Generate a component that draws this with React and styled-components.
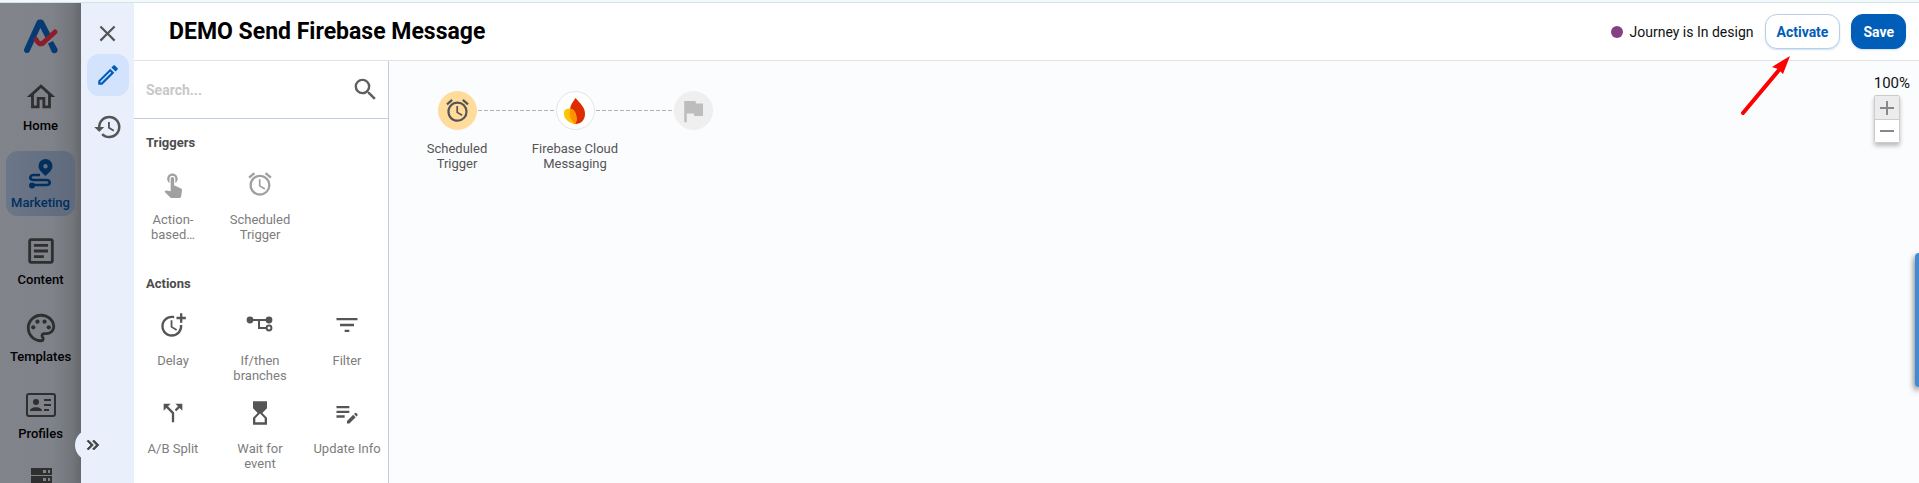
import React from "react";
import styled, { createGlobalStyle } from "styled-components";
import {
  MdOutlineHome,
  MdOutlineArticle,
  MdOutlinePalette,
  MdHistory,
  MdOutlineEdit,
  MdClose,
  MdSearch,
  MdTouchApp,
  MdAccessAlarm,
  MdMoreTime,
  MdFilterList,
  MdCallSplit,
  MdHourglassTop,
  MdEditNote,
  MdFlag,
  MdKeyboardDoubleArrowRight,
} from "react-icons/md";

const GlobalStyle = createGlobalStyle`
  *, *::before, *::after { box-sizing: border-box; }
  html, body, #root { height: 100%; }
  body {
    margin: 0;
    padding-top: 2px;
    overflow: hidden;
    font-family: Roboto, "Liberation Sans", sans-serif;
    color: #111;
    background: #f1f9fc;
  }
  button, input { font: inherit; color: inherit; }
  button { padding: 0; border: 0; background: none; cursor: pointer; }
  svg { display: block; flex: none; }
`;

const Page = styled.div`
  display: flex;
  height: 100%;
  border-top: 1px solid #d3e2e6;
  position: relative;
`;

const MainNav = styled.nav`
  flex: none;
  width: 81px;
  padding: 16px 6px 0;
  display: flex;
  flex-direction: column;
  align-items: center;
  overflow: hidden;
  background: linear-gradient(90deg, #81848b 0, #7f8289 52px, #73767b 72px, #66686c 100%);
`;

const Logo = styled.a`
  flex: none;
  height: 35px;
  margin-bottom: 20px;
`;

const NavList = styled.div`
  align-self: stretch;
  display: flex;
  flex-direction: column;
  gap: 12px;
`;

const NavItem = styled.a`
  height: 65px;
  padding-top: 7px;
  border-radius: 12px;
  display: flex;
  flex-direction: column;
  align-items: center;
  gap: 5px;
  font-size: 13px;
  line-height: 16px;
  font-weight: 500;
  text-decoration: none;
  color: ${(p) => (p.$active ? "#022f5e" : "#000")};
  background: ${(p) => (p.$active ? "linear-gradient(90deg, #6b7689, #5f6a7c)" : "none")};
`;

const NavIcon = styled.span`
  height: 32px;
  display: flex;
  align-items: center;
  color: ${(p) => (p.$active ? "#022f5e" : "#2f2f2f")};
`;

const Rail = styled.aside`
  position: relative;
  flex: none;
  width: 53px;
  padding: 9px 6px;
  display: flex;
  flex-direction: column;
  align-items: center;
  background: #e9f0fc;
`;

const RailButton = styled.button`
  width: 42px;
  height: 42px;
  display: flex;
  align-items: center;
  justify-content: center;
  border-radius: 12px;
  color: ${(p) => (p.$active ? "#005eb8" : "#555")};
  background: ${(p) => (p.$active ? "#d3e3fd" : "none")};
`;

const RailGroup = styled.div`
  display: flex;
  flex-direction: column;
  gap: 10px;
`;

const Expand = styled.button`
  position: absolute;
  left: -6px;
  bottom: 22px;
  width: 32px;
  height: 32px;
  padding-right: 4px;
  border-radius: 50%;
  display: flex;
  align-items: center;
  justify-content: flex-end;
  color: #444;
  background: #e9f0fc;
  path:not([fill="none"]) { stroke: currentColor; stroke-width: 1; }
`;

const Work = styled.div`
  flex: 1;
  min-width: 0;
  display: flex;
  flex-direction: column;
`;

const Header = styled.header`
  flex: none;
  height: 58px;
  padding: 0 13px 0 35px;
  display: flex;
  align-items: center;
  justify-content: space-between;
  background: #fff;
  border-bottom: 1px solid #e0e2e5;
`;

const Title = styled.h1`
  margin: 0;
  font-size: 23px;
  line-height: 28px;
  font-weight: 700;
  color: #000;
`;

const HeaderActions = styled.div`
  display: flex;
  align-items: center;
  gap: 11px;
`;

const Status = styled.div`
  display: flex;
  align-items: center;
  gap: 7px;
  font-size: 14px;
  line-height: 20px;
`;

const StatusDot = styled.span`
  width: 12px;
  height: 12px;
  border-radius: 50%;
  background: #854085;
`;

const ActionButton = styled.button`
  height: 35px;
  padding: 0 11px;
  border-radius: 12px;
  font-size: 14px;
  line-height: 20px;
  font-weight: 700;
  color: ${(p) => (p.$primary ? "#fff" : "#005eb8")};
  background: ${(p) => (p.$primary ? "#005eb8" : "#fff")};
  border: 1px solid ${(p) => (p.$primary ? "#005eb8" : "#b9cfe8")};
  box-shadow: 0 1px 2px rgba(0, 94, 184, 0.2);
`;

const Body = styled.div`
  flex: 1;
  min-height: 0;
  display: flex;
`;

const Palette = styled.section`
  flex: none;
  width: 255px;
  overflow: hidden;
  background: #fff;
  border-right: 1px solid #c0cbdf;
`;

const SearchBar = styled.label`
  height: 58px;
  padding: 0 8px 0 12px;
  display: flex;
  align-items: center;
  border-bottom: 1px solid #c0cbdf;
  color: #5f5f5f;
`;

const SearchInput = styled.input`
  flex: 1;
  min-width: 0;
  padding: 0;
  border: 0;
  outline: 0;
  font-size: 14px;
  line-height: 20px;
  font-weight: 700;
  background: none;
  &::placeholder { color: #c8c8c8; opacity: 1; }
`;

const Group = styled.div`
  padding: 16px 0 0 3px;
  height: ${(p) => (p.$tall ? "220px" : "141px")};
`;

const GroupTitle = styled.h2`
  margin: 0 0 19px;
  padding-left: 9px;
  font-size: 13px;
  line-height: 16px;
  font-weight: 700;
  color: #4c4c4c;
`;

const Tiles = styled.div`
  display: grid;
  grid-template-columns: 72px 72px 72px;
  column-gap: 15px;
  row-gap: 13px;
`;

const Tile = styled.button`
  height: 75px;
  display: flex;
  flex-direction: column;
  align-items: center;
  gap: 14px;
  color: ${(p) => (p.$muted ? "#a0a0a0" : "#555")};
`;

const TileLabel = styled.span`
  width: 100%;
  font-size: 13px;
  line-height: 15px;
  color: #7d7d7d;
`;

const Canvas = styled.main`
  flex: 1;
  min-width: 0;
  padding: 30px 9px 0 18px;
  display: flex;
  justify-content: space-between;
  align-items: flex-start;
  background: #fbfcfe;
`;

const Flow = styled.div`
  display: flex;
  align-items: flex-start;
`;

const Step = styled.div`
  width: 100px;
  display: flex;
  flex-direction: column;
  align-items: center;
  gap: 11px;
  text-align: center;
  font-size: 13px;
  line-height: 15px;
  color: #555;
`;

const Node = styled.div`
  width: 39px;
  height: 39px;
  border-radius: 50%;
  display: flex;
  align-items: center;
  justify-content: center;
  color: ${(p) => p.$color};
  background: ${(p) => p.$fill};
  border: 1px solid ${(p) => p.$line};
`;

const Connector = styled.div`
  width: 76px;
  height: 1px;
  margin: 19px -29px 0;
  background: repeating-linear-gradient(90deg, #b0b0b0 0 4px, transparent 4px 6px);
`;

const ZoomPanel = styled.div`
  margin-top: -17px;
  display: flex;
  flex-direction: column;
  gap: 3px;
  font-size: 15px;
  line-height: 18px;
`;

const ZoomButtons = styled.div`
  width: 26px;
  border: 1px solid #ccc;
  border-radius: 2px;
  box-shadow: 0 3px 4px rgba(0, 0, 0, 0.25);
`;

const ZoomButton = styled.button`
  width: 24px;
  height: 23px;
  display: flex;
  align-items: center;
  justify-content: center;
  color: #85898d;
  background: ${(p) => (p.$shaded ? "#ececec" : "#fff")};
  & + & { border-top: 1px solid #ccc; }
`;

const SideTab = styled.div`
  position: absolute;
  right: 0;
  top: 250px;
  width: 4px;
  height: 134px;
  border-radius: 8px 0 0 8px;
  background: #428bd0;
  box-shadow: 0 3px 6px rgba(0, 0, 0, 0.8);
`;

const Pointer = styled.svg`
  position: absolute;
  right: 128px;
  top: 49px;
`;

const LogoMark = () => (
  <svg width="36" height="35" viewBox="0 0 36 35" fill="none">
    <path d="M4 31L16.500 3.500H18L25 17" stroke="#073a72" strokeWidth="6" strokeLinecap="round" strokeLinejoin="round" />
    <path d="M25 24.500l5-2.500 4.500 8c1 4-4 6-6 2.500z" fill="#073a72" />
    <path d="M13 20.500c2 4 5 6 8 2.500L32 13" stroke="#8c1d2b" strokeWidth="5" strokeLinecap="round" strokeLinejoin="round" />
  </svg>
);

const RouteIcon = () => (
  <svg width="30" height="32" viewBox="0 0 30 32">
    <path d="M19.500 1a7 7 0 0 1 7 7c0 4-4 7-7 10-3-3-7-6-7-10a7 7 0 0 1 7-7zm0 5a2.200 2.200 0 1 0 0 4.400 2.200 2.200 0 0 0 0-4.400z" fill="currentColor" fillRule="evenodd" />
    <path d="M14 17H8c-5 0-5 5 0 5h12c5 0 5 5 0 5H6" fill="none" stroke="currentColor" strokeWidth="2.600" />
    <circle cx="6" cy="27.500" r="3" fill="currentColor" />
  </svg>
);

const ProfileIcon = () => (
  <svg width="32" height="32" viewBox="0 0 32 32" fill="currentColor">
    <rect x="2" y="5" width="28" height="22" rx="2" fill="none" stroke="currentColor" strokeWidth="2" />
    <circle cx="11" cy="13" r="3" />
    <path d="M5 22c0-5 12-5 12 0zM19 10h7v2h-7zM19 15h7v2h-7zM19 20h5v2h-5z" />
  </svg>
);

const ServerIcon = () => (
  <svg width="32" height="32" viewBox="0 0 32 32">
    <path fill="currentColor" fillRule="evenodd" d="M6 2h21v7H6zm12 2v3h3V4zm5 0v3h2V4zM6 10h21v7H6zm12 2v3h3v-3zm5 0v3h2v-3zM6 18h21v7H6z" />
  </svg>
);

const BranchIcon = () => (
  <svg width="28" height="28" viewBox="0 0 28 28" fill="none" stroke="currentColor" strokeWidth="2">
    <path d="M4 9h19M13 9v8h7" />
    <circle cx="4" cy="9" r="3.400" fill="currentColor" stroke="none" />
    <circle cx="23" cy="9" r="3.400" fill="currentColor" stroke="none" />
    <circle cx="23" cy="17" r="2.400" />
  </svg>
);

const FlameIcon = () => (
  <svg width="22" height="28" viewBox="0 0 22 28">
    <path d="M11.500 1c5 6 9.500 9 9.500 16 0 6-4 10-9.500 10S6 20 6 14c0-6 3-9 5.500-13z" fill="#dd2c00" />
    <path d="M1 13c3-3 10-2 11 5 1 4 1 6-1 9C5 26 0 22 0 17c0-2 0-3 1-4z" fill="#ffc400" />
    <path d="M6.200 12c4 1 6 4 6.300 8 0 2 0 5-1 7-5-3-6.500-9-5.300-15z" fill="#ff9100" />
  </svg>
);

const PointerArrow = () => (
  <Pointer width="52" height="66" viewBox="0 0 52 66" aria-hidden="true">
    <path d="M4 61L40 18" stroke="#fe0000" strokeWidth="4" strokeLinecap="round" />
    <path d="M51 4L44 22l-5-5-6-2z" fill="#fe0000" />
  </Pointer>
);

const navItems = [
  { label: "Home", icon: <MdOutlineHome size={34} /> },
  { label: "Marketing", icon: <RouteIcon />, active: true },
  { label: "Content", icon: <MdOutlineArticle size={34} /> },
  { label: "Templates", icon: <MdOutlinePalette size={34} /> },
  { label: "Profiles", icon: <ProfileIcon /> },
  { label: "", icon: <ServerIcon /> },
];

const triggers = [
  { label: "Action-based…", icon: <MdTouchApp size={28} /> },
  { label: "Scheduled Trigger", icon: <MdAccessAlarm size={28} /> },
];

const actions = [
  { label: "Delay", icon: <MdMoreTime size={28} /> },
  { label: "If/then branches", icon: <BranchIcon /> },
  { label: "Filter", icon: <MdFilterList size={28} /> },
  { label: "A/B Split", icon: <MdCallSplit size={28} /> },
  { label: "Wait for event", icon: <MdHourglassTop size={28} /> },
  { label: "Update Info", icon: <MdEditNote size={28} /> },
];

const TileGroup = ({ title, items, muted, tall }) => (
  <Group $tall={tall}>
    <GroupTitle>{title}</GroupTitle>
    <Tiles>
      {items.map((item) => (
        <Tile key={item.label} $muted={muted}>
          {item.icon}
          <TileLabel>{item.label}</TileLabel>
        </Tile>
      ))}
    </Tiles>
  </Group>
);

export default function App() {
  return (
    <>
      <GlobalStyle />
      <Page>
        <MainNav>
          <Logo href="#" aria-label="Dashboard"><LogoMark /></Logo>
          <NavList>
            {navItems.map((item, i) => (
              <NavItem key={i} href="#" $active={item.active}>
                <NavIcon $active={item.active}>{item.icon}</NavIcon>
                {item.label}
              </NavItem>
            ))}
          </NavList>
        </MainNav>
        <Rail>
          <RailButton aria-label="Close"><MdClose size={27} /></RailButton>
          <RailGroup>
            <RailButton $active aria-label="Edit"><MdOutlineEdit size={26} /></RailButton>
            <RailButton aria-label="History"><MdHistory size={30} /></RailButton>
          </RailGroup>
          <Expand aria-label="Expand"><MdKeyboardDoubleArrowRight size={20} /></Expand>
        </Rail>
        <Work>
          <Header>
            <Title>DEMO Send Firebase Message</Title>
            <HeaderActions>
              <Status><StatusDot />Journey is In design</Status>
              <ActionButton>Activate</ActionButton>
              <ActionButton $primary>Save</ActionButton>
            </HeaderActions>
          </Header>
          <Body>
            <Palette>
              <SearchBar>
                <SearchInput placeholder="Search..." aria-label="Search" />
                <MdSearch size={29} />
              </SearchBar>
              <TileGroup title="Triggers" items={triggers} muted />
              <TileGroup title="Actions" items={actions} tall />
            </Palette>
            <Canvas>
              <Flow>
                <Step>
                  <Node $fill="#ffdc9b" $line="#ffdc9b" $color="#555"><MdAccessAlarm size={27} /></Node>
                  <span>Scheduled<br />Trigger</span>
                </Step>
                <Connector />
                <Step>
                  <Node $fill="#fff" $line="#e4e4e4"><FlameIcon /></Node>
                  <span>Firebase Cloud Messaging</span>
                </Step>
                <Connector />
                <Step>
                  <Node $fill="#efefef" $line="#efefef" $color="#bdbdbd"><MdFlag size={30} /></Node>
                </Step>
              </Flow>
              <ZoomPanel>
                100%
                <ZoomButtons>
                  <ZoomButton $shaded aria-label="Zoom in">
                    <svg width="14" height="14" stroke="currentColor" strokeWidth="2"><path d="M0 7h14M7 0v14" /></svg>
                  </ZoomButton>
                  <ZoomButton aria-label="Zoom out">
                    <svg width="14" height="14" stroke="currentColor" strokeWidth="2"><path d="M0 7h14" /></svg>
                  </ZoomButton>
                </ZoomButtons>
              </ZoomPanel>
            </Canvas>
          </Body>
        </Work>
        <SideTab />
        <PointerArrow />
      </Page>
    </>
  );
}
